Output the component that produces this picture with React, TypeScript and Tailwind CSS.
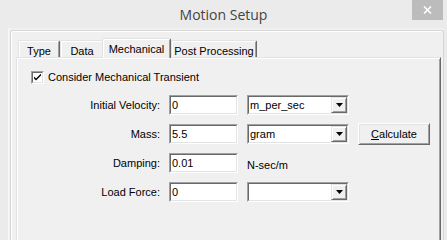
import React from 'react';

function Sunken({ className = '', children }: { className?: string; children?: React.ReactNode }) {
  return (
    <div className={`border border-t-[#a0a0a0] border-l-[#a0a0a0] border-r-white border-b-white ${className}`}>
      <div className="h-full border border-t-[#696969] border-l-[#696969] border-r-[#e3e3e3] border-b-[#e3e3e3] bg-white flex items-center">
        {children}
      </div>
    </div>
  );
}

function TextBox({ value }: { value: string }) {
  return (
    <Sunken className="w-[69px] h-[20px]">
      <span className="pl-[1px] leading-none">{value}</span>
    </Sunken>
  );
}

function Combo({ value }: { value: string }) {
  return (
    <Sunken className="w-[102px] h-[20px]">
      <span className="flex-1 pl-[1px] leading-none">{value}</span>
      <div className="w-[16px] h-full bg-[#f0f0f0] border border-t-[#e3e3e3] border-l-[#e3e3e3] border-r-[#696969] border-b-[#696969] shadow-[inset_1px_1px_0_#fff,inset_-1px_-1px_0_#a0a0a0] flex items-center justify-center">
        <svg width="7" height="4" viewBox="0 0 7 4">
          <path d="M0 0h7L3.5 4z" fill="#000" />
        </svg>
      </div>
    </Sunken>
  );
}

function Tab({ label, width, selected }: { label: string; width: string; selected?: boolean }) {
  if (selected) {
    return (
      <div
        className={`${width} h-[20px] -mb-[1px] -ml-[2px] relative z-10 bg-[#f0f0f0] border-t border-l border-r border-t-[#e3e3e3] border-l-[#e3e3e3] border-r-[#696969] rounded-t-[2px] shadow-[inset_1px_1px_0_#fff,inset_-1px_0_0_#a0a0a0] flex justify-center pt-[2px]`}
      >
        {label}
      </div>
    );
  }
  return (
    <div
      className={`${width} h-[17px] bg-[#f0f0f0] border-t border-l border-r border-t-[#e3e3e3] border-l-[#e3e3e3] border-r-[#696969] rounded-t-[2px] shadow-[inset_1px_1px_0_#fff,inset_-1px_0_0_#a0a0a0] flex justify-center pt-[2px]`}
    >
      {label}
    </div>
  );
}

function Row({ label, children }: { label: string; children: React.ReactNode }) {
  return (
    <div className="flex items-center h-[20px]">
      <div className="w-[143px] text-right">{label}</div>
      <div className="ml-[9px] flex items-center gap-[9px]">{children}</div>
    </div>
  );
}

export default function App() {
  return (
    <div className="w-[447px] h-[240px] bg-[#ebebeb] flex flex-col overflow-hidden font-['Liberation_Sans',Arial,sans-serif] text-[11px] text-black">
      {/* Title bar */}
      <div className="h-[28px] shrink-0 relative">
        <div className="text-center pt-[4px] text-[14px] text-[#444] font-['Open_Sans',sans-serif]">Motion Setup</div>
        <button className="absolute right-[4px] top-0 w-[31px] h-[20px] bg-[#bcbcbc] flex items-center justify-center">
          <svg width="9" height="8" viewBox="0 0 9 8">
            <path d="M1 0.5l7 7M8 0.5l-7 7" stroke="#fff" strokeWidth="1.6" />
          </svg>
        </button>
      </div>

      {/* Client area */}
      <div className="flex-1 ml-[8px] mr-[3px] bg-[#f0f0f0] border-l border-l-[#f8f8f8] pt-[2px] pl-[1px] flex flex-col">
        <div className="flex-1 border-t border-l border-r border-[#d6d6d6] rounded-t-[3px] shadow-[inset_1px_1px_0_#fff] pt-[7px] pl-[5px] pr-[2px] flex flex-col">
          {/* Tabs */}
          <div className="flex items-end h-[19px] pl-[2px] shrink-0">
            <Tab label="Type" width="w-[42px]" />
            <Tab label="Data" width="w-[44px]" />
            <Tab label="Mechanical" width="w-[69px]" selected />
            <Tab label="Post Processing" width="w-[86px]" />
          </div>

          {/* Page */}
          <div className="flex-1 border-t border-l border-r border-t-[#e3e3e3] border-l-[#e3e3e3] border-r-[#696969] shadow-[inset_1px_1px_0_#fff,inset_-1px_0_0_#a0a0a0] flex flex-col">
            <div className="flex items-center h-[13px] mt-[13px] pl-[14px]">
              <div className="w-[13px] h-[13px] border border-t-[#a0a0a0] border-l-[#a0a0a0] border-r-white border-b-white">
                <div className="w-full h-full border border-t-[#696969] border-l-[#696969] border-r-[#e3e3e3] border-b-[#e3e3e3] bg-white flex items-center justify-center">
                  <svg width="7" height="7" viewBox="0 0 7 7">
                    <path d="M0 2.5l2 2 5-5v2l-5 5-2-2z" fill="#000" />
                  </svg>
                </div>
              </div>
              <span className="ml-[4px]">Consider Mechanical Transient</span>
            </div>

            <div className="mt-[11px] flex flex-col gap-[9px]">
              <Row label="Initial Velocity:">
                <TextBox value="0" />
                <Combo value="m_per_sec" />
              </Row>
              <Row label="Mass:">
                <TextBox value="5.5" />
                <Combo value="gram" />
                <button className="w-[72px] h-[22px] -my-[1px] bg-[#f0f0f0] border border-t-white border-l-white border-r-[#696969] border-b-[#696969] shadow-[inset_1px_1px_0_#e3e3e3,inset_-1px_-1px_0_#a0a0a0] flex items-center justify-center">
                  <span>
                    <span className="underline">C</span>alculate
                  </span>
                </button>
              </Row>
              <Row label="Damping:">
                <TextBox value="0.01" />
                <span className="pt-[4px]">N-sec/m</span>
              </Row>
              <Row label="Load Force:">
                <TextBox value="0" />
                <Combo value="" />
              </Row>
            </div>
          </div>
        </div>
      </div>
    </div>
  );
}
